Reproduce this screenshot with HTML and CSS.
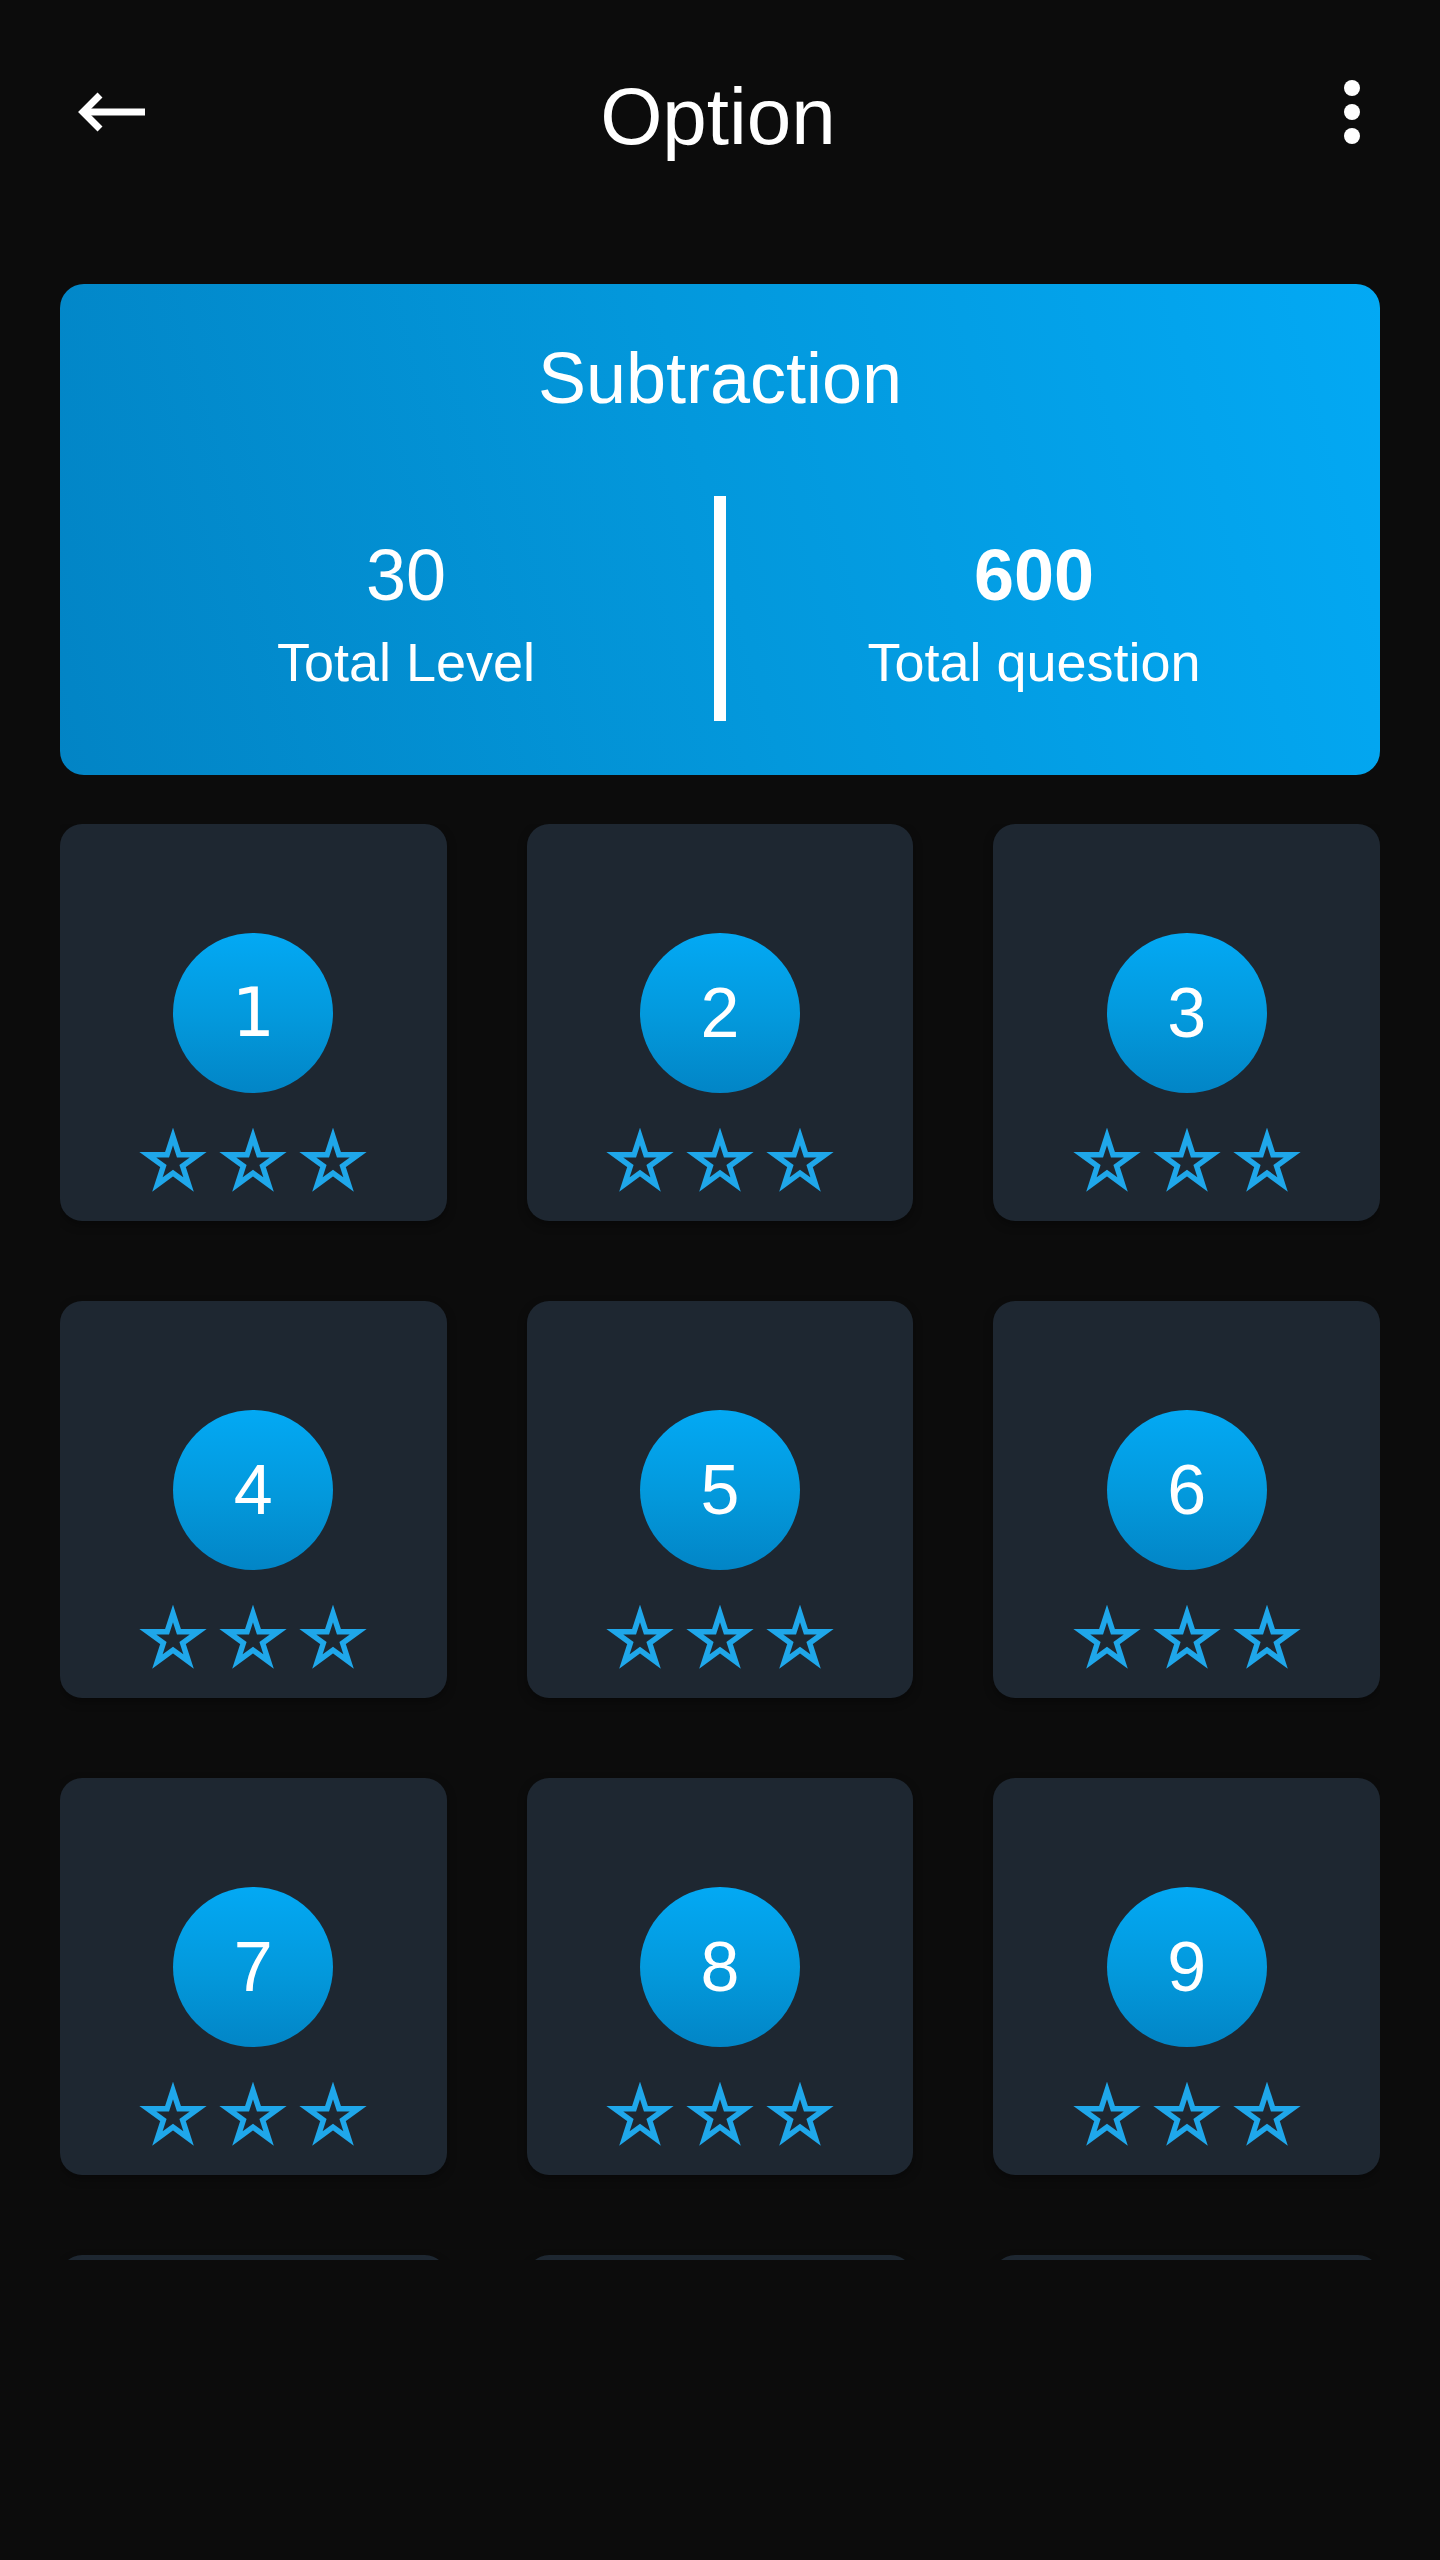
FILE: index.html
```html
<!DOCTYPE html>
<html lang="en">
<head>
<meta charset="utf-8">
<title>Option</title>
<link rel="stylesheet" href="styles.css">
</head>
<body>
<header class="topbar">
  <svg class="back" width="70" height="46" viewBox="0 0 70 46" aria-label="Back">
    <polyline points="24,6 7,23 24,40" fill="none" stroke="#fff" stroke-width="7" stroke-linejoin="miter"/>
    <line x1="8" y1="23" x2="69" y2="23" stroke="#fff" stroke-width="7"/>
  </svg>
  <h1 class="title">Option</h1>
  <svg class="more" width="16" height="64" viewBox="0 0 16 64" aria-label="More">
    <circle cx="8" cy="8" r="8" fill="#fff"/>
    <circle cx="8" cy="32" r="8" fill="#fff"/>
    <circle cx="8" cy="56" r="8" fill="#fff"/>
  </svg>
</header>

<section class="summary">
  <h2 class="summary-title">Subtraction</h2>
  <div class="stats">
    <div class="stat">
      <div class="stat-value">30</div>
      <div class="stat-label">Total Level</div>
    </div>
    <div class="divider"></div>
    <div class="stat">
      <div class="stat-value bold">600</div>
      <div class="stat-label">Total question</div>
    </div>
  </div>
</section>

<svg width="0" height="0" class="defs">
  <defs>
    <polygon id="star" points="0,-26.5 5.95,-8.19 25.2,-8.19 9.63,3.13 15.58,21.44 0,10.13 -15.58,21.44 -9.63,3.13 -25.2,-8.19 -5.95,-8.19"/>
  </defs>
</svg>

<main class="levels">
  <div class="grid">
    <div class="level"><div class="badge"><span class="num alt">1</span></div><div class="stars"><svg viewBox="-35 -35 70 66"><use href="#star"/></svg><svg viewBox="-35 -35 70 66"><use href="#star"/></svg><svg viewBox="-35 -35 70 66"><use href="#star"/></svg></div></div>
    <div class="level"><div class="badge"><span class="num">2</span></div><div class="stars"><svg viewBox="-35 -35 70 66"><use href="#star"/></svg><svg viewBox="-35 -35 70 66"><use href="#star"/></svg><svg viewBox="-35 -35 70 66"><use href="#star"/></svg></div></div>
    <div class="level"><div class="badge"><span class="num">3</span></div><div class="stars"><svg viewBox="-35 -35 70 66"><use href="#star"/></svg><svg viewBox="-35 -35 70 66"><use href="#star"/></svg><svg viewBox="-35 -35 70 66"><use href="#star"/></svg></div></div>
    <div class="level"><div class="badge"><span class="num">4</span></div><div class="stars"><svg viewBox="-35 -35 70 66"><use href="#star"/></svg><svg viewBox="-35 -35 70 66"><use href="#star"/></svg><svg viewBox="-35 -35 70 66"><use href="#star"/></svg></div></div>
    <div class="level"><div class="badge"><span class="num">5</span></div><div class="stars"><svg viewBox="-35 -35 70 66"><use href="#star"/></svg><svg viewBox="-35 -35 70 66"><use href="#star"/></svg><svg viewBox="-35 -35 70 66"><use href="#star"/></svg></div></div>
    <div class="level"><div class="badge"><span class="num">6</span></div><div class="stars"><svg viewBox="-35 -35 70 66"><use href="#star"/></svg><svg viewBox="-35 -35 70 66"><use href="#star"/></svg><svg viewBox="-35 -35 70 66"><use href="#star"/></svg></div></div>
    <div class="level"><div class="badge"><span class="num">7</span></div><div class="stars"><svg viewBox="-35 -35 70 66"><use href="#star"/></svg><svg viewBox="-35 -35 70 66"><use href="#star"/></svg><svg viewBox="-35 -35 70 66"><use href="#star"/></svg></div></div>
    <div class="level"><div class="badge"><span class="num">8</span></div><div class="stars"><svg viewBox="-35 -35 70 66"><use href="#star"/></svg><svg viewBox="-35 -35 70 66"><use href="#star"/></svg><svg viewBox="-35 -35 70 66"><use href="#star"/></svg></div></div>
    <div class="level"><div class="badge"><span class="num">9</span></div><div class="stars"><svg viewBox="-35 -35 70 66"><use href="#star"/></svg><svg viewBox="-35 -35 70 66"><use href="#star"/></svg><svg viewBox="-35 -35 70 66"><use href="#star"/></svg></div></div>
    <div class="level"></div>
    <div class="level"></div>
    <div class="level"></div>
  </div>
</main>
</body>
</html>
```
FILE: styles.css
```css
html, body {
  margin: 0;
  padding: 0;
}
body {
  background: #0c0c0c;
  color: #fff;
  font-family: "Liberation Sans", Arial, sans-serif;
  width: 1440px;
  height: 2560px;
  overflow: hidden;
}
.defs {
  position: absolute;
  width: 0;
  height: 0;
}
.topbar {
  height: 224px;
  display: grid;
  grid-template-columns: 1fr auto 1fr;
  align-items: center;
  padding: 0 80px 0 76px;
  box-sizing: border-box;
}
.back {
  justify-self: start;
  display: block;
}
.more {
  justify-self: end;
  display: block;
}
.title {
  margin: 0;
  padding-top: 10px;
  font-size: 80px;
  line-height: 80px;
  font-weight: 400;
}
.summary {
  margin: 60px 60px 0;
  padding: 58px 38px 54px;
  border-radius: 24px;
  background: linear-gradient(75deg, #0284c5 0%, #0398dc 50%, #03a9f4 100%);
}
.summary-title {
  margin: 0 0 82px;
  font-size: 72px;
  line-height: 72px;
  font-weight: 400;
  text-align: center;
}
.stats {
  display: flex;
  align-items: flex-start;
}
.stat {
  flex: 1;
  text-align: center;
  padding-top: 43px;
}
.stat-value {
  font-size: 72px;
  line-height: 72px;
}
.stat-value.bold {
  font-weight: 700;
}
.stat-label {
  margin-top: 24px;
  font-size: 54px;
  line-height: 54px;
}
.divider {
  width: 12px;
  height: 225px;
  background: #fff;
}
.levels {
  margin: 49px 60px 0;
  height: 1436px;
  overflow: hidden;
}
.grid {
  display: grid;
  grid-template-columns: repeat(3, 1fr);
  gap: 80px;
}
.level {
  background: #1e2731;
  border-radius: 22px;
  box-shadow: 0 4px 10px rgba(0, 0, 0, 0.35);
  display: flex;
  flex-direction: column;
  align-items: center;
  padding: 109px 0 27px;
  height: 397px;
  box-sizing: border-box;
}
.badge {
  width: 160px;
  height: 160px;
  border-radius: 50%;
  background: linear-gradient(180deg, #03a9f4 0%, #0398db 55%, #0285c6 100%);
  display: flex;
  align-items: center;
  justify-content: center;
}
.num {
  font-size: 70px;
  line-height: 70px;
  color: #fff;
}
.num.alt {
  font-family: "DejaVu Sans", sans-serif;
  font-size: 68px;
}
.stars {
  margin-top: 35px;
  display: flex;
  gap: 10px;
}
.stars svg {
  width: 70px;
  height: 66px;
  display: block;
  fill: none;
  stroke: #1fa7ea;
  stroke-width: 5.5;
  stroke-linejoin: miter;
}
```
